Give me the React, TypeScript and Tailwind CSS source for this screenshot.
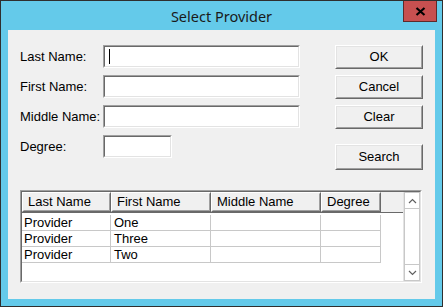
import React from "react";

function Field({ w, cursor }: { w: string; cursor?: boolean }) {
  return (
    <div className={`h-[23px] border border-t-[#a0a0a0] border-l-[#a0a0a0] border-b-white border-r-white ${w}`}>
      <div className="h-full border border-t-[#696969] border-l-[#696969] border-b-[#e3e3e3] border-r-[#e3e3e3] bg-white flex items-center pl-[4px]">
        {cursor ? <div className="w-px h-[15px] bg-black" /> : null}
      </div>
    </div>
  );
}

function Btn({ label, extra }: { label: string; extra?: string }) {
  return (
    <div className={`w-[88px] h-[24px] border border-t-white border-l-white border-b-[#696969] border-r-[#696969] ${extra ?? ""}`}>
      <div className="h-full border border-t-[#e3e3e3] border-l-[#e3e3e3] border-b-[#a0a0a0] border-r-[#a0a0a0] bg-[#f0f0f0] flex items-center justify-center text-[13px] text-black">
        {label}
      </div>
    </div>
  );
}

function Head({ label, w }: { label: string; w: string }) {
  return (
    <div className={`h-full border border-t-white border-l-white border-b-[#696969] border-r-[#696969] ${w}`}>
      <div className="h-full border border-t-[#f0f0f0] border-l-[#f0f0f0] border-b-[#a0a0a0] border-r-[#a0a0a0] bg-[#f0f0f0] flex items-center pl-[4px] text-[13px] text-black whitespace-nowrap">
        {label}
      </div>
    </div>
  );
}

const rows = [
  ["Provider", "One"],
  ["Provider", "Three"],
  ["Provider", "Two"],
];

export default function App() {
  return (
    <div className="w-[443px] h-[307px] bg-[#64caea] border border-[#2f2f2f] relative font-['Liberation_Sans',Arial,sans-serif] overflow-hidden">
      {/* Title bar */}
      <div className="h-[29px] flex items-center justify-center">
        <span className="font-['Noto_Sans',sans-serif] text-[14.5px] text-[#1a1a1a] leading-none mt-[2px]">Select Provider</span>
      </div>
      {/* Close button */}
      <div className="absolute left-[402px] top-[-1px] w-[34px] h-[22px] bg-[#c75050] border border-[#5e2a2a] flex items-center justify-center">
        <svg width="11" height="9" viewBox="0 0 11 9">
          <path d="M1.5 1 L9.5 8 M9.5 1 L1.5 8" stroke="#000" strokeWidth="2.2" />
        </svg>
      </div>
      {/* Client area */}
      <div className="ml-[7px] w-[427px] h-[269px] bg-[#f0f0f0] pt-[15px] pl-[12px]">
        <div className="flex">
          <div className="flex flex-col gap-[7px] w-[315px]">
            {[
              ["Last Name:", "w-[197px]", true],
              ["First Name:", "w-[197px]", false],
              ["Middle Name:", "w-[197px]", false],
              ["Degree:", "w-[69px]", false],
            ].map(([l, w, c]) => (
              <div key={l as string} className="flex items-center h-[23px]">
                <div className="w-[83px] text-[13px] text-black whitespace-nowrap">{l as string}</div>
                <Field w={w as string} cursor={c as boolean} />
              </div>
            ))}
          </div>
          <div className="flex flex-col gap-[6px]">
            <Btn label="OK" />
            <Btn label="Cancel" />
            <Btn label="Clear" />
            <Btn label="Search" extra="mt-[9px] h-[26px]" />
          </div>
        </div>
        {/* Table */}
        <div className="mt-[20px] w-[402px] h-[93px] border border-t-[#a0a0a0] border-l-[#a0a0a0] border-b-white border-r-white">
          <div className="w-full h-full border border-t-[#696969] border-l-[#696969] border-b-[#e3e3e3] border-r-[#e3e3e3] bg-white flex">
            <div className="w-[381px] flex flex-col">
              <div className="h-[21px] flex border-b border-[#696969]">
                <Head label="Last Name" w="w-[89px]" />
                <Head label="First Name" w="w-[100px]" />
                <Head label="Middle Name" w="w-[110px]" />
                <Head label="Degree" w="w-[60px]" />
                <div className="flex-1 h-full bg-[#f0f0f0]" />
              </div>
              <div className="pt-[2px]">
                {rows.map((r, i) => (
                  <div key={i} className="flex h-[16px]">
                    <div className="w-[89px] border-r border-b border-[#c8c8c8] text-[13px] leading-[15px] pl-[2px] text-black">{r[0]}</div>
                    <div className="w-[100px] border-r border-b border-[#c8c8c8] text-[13px] leading-[15px] pl-[3px] text-black">{r[1]}</div>
                    <div className="w-[110px] border-r border-b border-[#c8c8c8]" />
                    <div className="w-[60px] border-r border-b border-[#c8c8c8]" />
                  </div>
                ))}
              </div>
            </div>
            {/* Scrollbar */}
            <div className="w-[17px] h-full flex flex-col bg-[#f0f0f0] border-l border-[#e3e3e3]">
              <div className="h-[17px] bg-white border border-[#c8c8c8] flex items-center justify-center">
                <svg width="9" height="6" viewBox="0 0 9 6"><path d="M1 5 L4.5 1.5 L8 5" stroke="#606060" strokeWidth="1.2" fill="none" /></svg>
              </div>
              <div className="flex-1 bg-white border-x border-[#c8c8c8]" />
              <div className="h-[17px] bg-white border border-[#c8c8c8] flex items-center justify-center">
                <svg width="9" height="6" viewBox="0 0 9 6"><path d="M1 1 L4.5 4.5 L8 1" stroke="#606060" strokeWidth="1.2" fill="none" /></svg>
              </div>
            </div>
          </div>
        </div>
      </div>
    </div>
  );
}
